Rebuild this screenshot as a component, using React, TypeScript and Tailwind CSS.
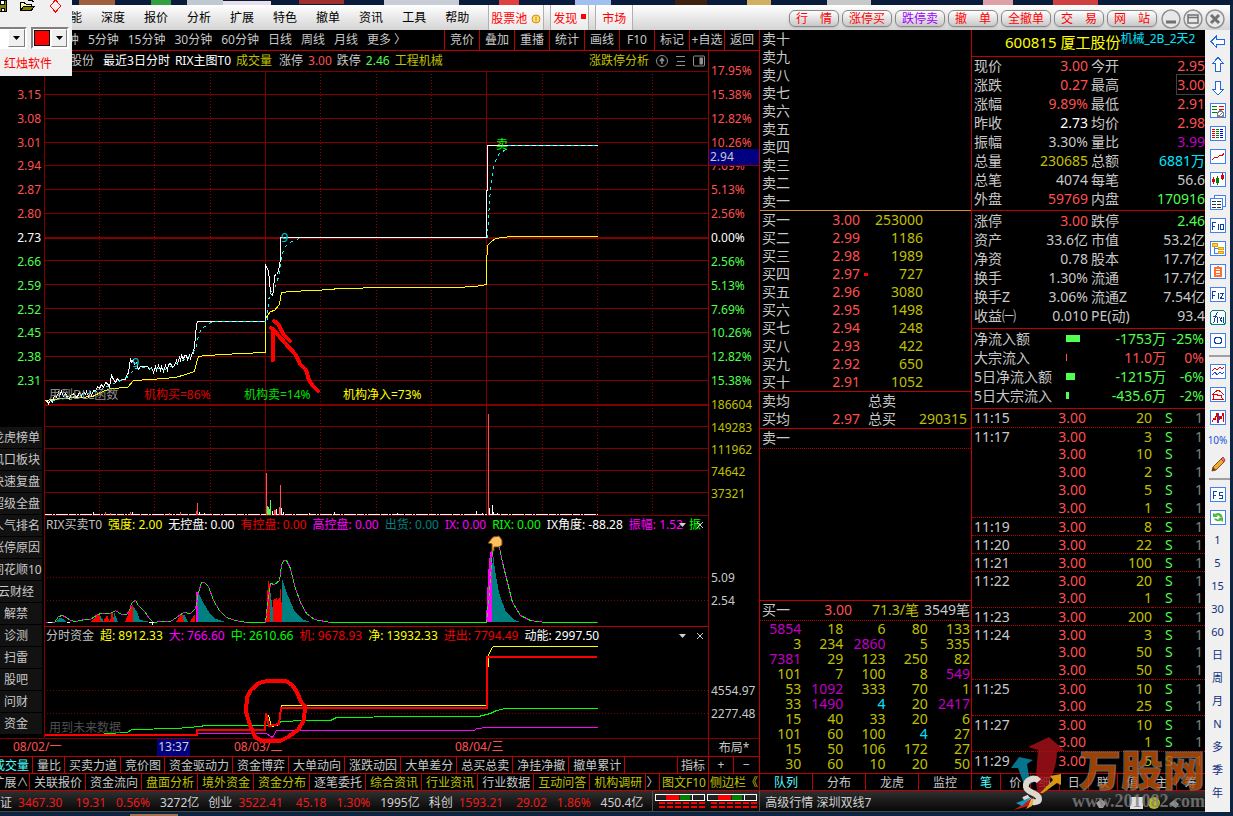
import React from 'react';

const font = "font-['Noto_Sans','Noto_Sans_CJK_SC',sans-serif]";

// price / percent axes
const prices = ['3.15', '3.08', '3.01', '2.94', '2.87', '2.80', '2.73', '2.66', '2.59', '2.52', '2.45', '2.38', '2.31'];
const percents = ['17.95%', '15.38%', '12.82%', '10.26%', '7.69%', '5.13%', '2.56%', '0.00%', '2.56%', '5.13%', '7.69%', '10.26%', '12.82%', '15.38%'];
const volumes = ['149283', '111962', '74642', '37321'];

const menus = ['功能', '深度', '报价', '分析', '扩展', '特色', '撤单', '资讯', '工具', '帮助'];
const periods = ['1分钟', '5分钟', '15分钟', '30分钟', '60分钟', '日线', '周线', '月线', '更多 〉'];
const tools = ['竞价', '叠加', '重播', '统计', '画线', 'F10', '标记', '+自选', '返回'];
const tradeButtons = ['行　情', '涨停买', '跌停卖', '撤　单', '全撤单', '交　易', '网　站'];
const sideLinks = ['龙虎榜单', '风口板块', '快速复盘', '超级全盘', '人气排名', '涨停原因', '同花顺10', '云财经', '解禁', '诊测', '扫雷', '股吧', '问财', '资金'];

const indicatorTabs = ['成交量', '量比', '买卖力道', '竞价图', '资金驱动力', '资金博弈', '大单动向', '涨跌动因', '大单差分', '总买总卖', '净挂净撤', '撤单累计'];
const infoTabs: [string, boolean][] = [
  ['关联报价', false],
  ['资金流向', false],
  ['盘面分析', true],
  ['境外资金', true],
  ['资金分布', true],
  ['逐笔委托', false],
  ['综合资讯', true],
  ['行业资讯', true],
  ['行业数据', false],
  ['互动问答', true],
  ['机构调研', true],
];

const numerals = ['一', '二', '三', '四', '五', '六', '七', '八', '九', '十'];
const bids = [
  ['3.00', '253000'],
  ['2.99', '1186'],
  ['2.98', '1989'],
  ['2.97', '727'],
  ['2.96', '3080'],
  ['2.95', '1498'],
  ['2.94', '248'],
  ['2.93', '422'],
  ['2.92', '650'],
  ['2.91', '1052'],
];

const queue = [
  ['5854', '18', '6', '80', '133'],
  ['3', '234', '2860', '5', '335'],
  ['7381', '29', '123', '250', '82'],
  ['101', '7', '100', '8', '549'],
  ['53', '1092', '333', '70', '1'],
  ['33', '1490', '4', '20', '2417'],
  ['15', '40', '33', '20', '6'],
  ['101', '60', '100', '4', '27'],
  ['15', '50', '106', '172', '27'],
  ['30', '60', '10', '20', '50'],
];

const RED = 'text-[#ff5050]';
const GREEN = 'text-[#50ff50]';
const GRAY = 'text-[#c8c8c8]';
const OLIVE = 'text-[#c0c000]';
const PURPLE = 'text-[#c000c0]';
const CYAN = 'text-[#00e5ff]';

const quote = [
  ['现价', '3.00', RED, '今开', '2.95', RED],
  ['涨跌', '0.27', RED, '最高', '3.00', RED],
  ['涨幅', '9.89%', RED, '最低', '2.91', RED],
  ['昨收', '2.73', 'text-white', '均价', '2.98', RED],
  ['振幅', '3.30%', GRAY, '量比', '3.99', PURPLE],
  ['总量', '230685', OLIVE, '总额', '6881万', CYAN],
  ['总笔', '4074', GRAY, '每笔', '56.6', GRAY],
  ['外盘', '59769', RED, '内盘', '170916', GREEN],
];

const finance = [
  ['涨停', '3.00', RED, '跌停', '2.46', GREEN],
  ['资产', '33.6亿', GRAY, '市值', '53.2亿', GRAY],
  ['净资', '0.78', GRAY, '股本', '17.7亿', GRAY],
  ['换手', '1.30%', GRAY, '流通', '17.7亿', GRAY],
  ['换手Z', '3.06%', GRAY, '流通Z', '7.54亿', GRAY],
  ['收益㈠', '0.010', GRAY, 'PE(动)', '93.4', GRAY],
];

const flows = [
  { name: '净流入额', bar: 14, value: '-1753万', pct: '-25%', up: false },
  { name: '大宗流入', bar: 1, value: '11.0万', pct: '0%', up: true },
  { name: '5日净流入额', bar: 9, value: '-1215万', pct: '-6%', up: false },
  { name: '5日大宗流入', bar: 3, value: '-435.6万', pct: '-2%', up: false },
];

const ticks = [
  ['11:15', '20'],
  ['11:17', '3'],
  ['', '10'],
  ['', '2'],
  ['', '5'],
  ['', '1'],
  ['11:19', '8'],
  ['11:20', '22'],
  ['11:21', '100'],
  ['11:22', '20'],
  ['', '1'],
  ['11:23', '200'],
  ['11:24', '3'],
  ['', '50'],
  ['', '50'],
  ['11:25', '10'],
  ['', '25'],
  ['11:27', '10'],
  ['', '1'],
  ['11:29', '5'],
];

const rixLegend = [
  ['RIX买卖T0', 'text-[#c0c0c0]'],
  ['强度: 2.00', 'text-[#ffff00]'],
  ['无控盘: 0.00', 'text-white'],
  ['有控盘: 0.00', 'text-[#f00000]'],
  ['高控盘: 0.00', 'text-[#ff00ff]'],
  ['出货: 0.00', 'text-[#008080]'],
  ['IX: 0.00', 'text-[#ff00ff]'],
  ['RIX: 0.00', 'text-[#00ff00]'],
  ['IX角度: -88.28', 'text-white'],
  ['振幅: 1.52', 'text-[#ff00ff]'],
  ['振', 'text-[#00ff00]'],
];

const fundLegend = [
  ['分时资金', 'text-[#c0c0c0]'],
  ['超: 8912.33', 'text-[#ffff00]'],
  ['大: 766.60', 'text-[#ff00ff]'],
  ['中: 2610.66', 'text-[#00ff00]'],
  ['机: 9678.93', 'text-[#f00000]'],
  ['净: 13932.33', 'text-[#ffff00]'],
  ['进出: 7794.49', 'text-[#f00000]'],
  ['动能: 2997.50', 'text-white'],
];

const indices = [
  ['上证', '3467.30', '19.31', '0.56%', '3272亿'],
  ['创业', '3522.41', '45.18', '1.30%', '1995亿'],
  ['科创', '1593.21', '29.02', '1.86%', '450.4亿'],
];

// chart series, all in the same x/y space
const priceLine =
  '45,402 47,400 48,404 50,399 52,402 54,395 56,397 58,392 59,395 61,391 63,396 65,393 67,397 69,399 70,395 73,393 75,397 77,396 79,392 81,396 83,391 85,394 86,391 88,396 90,392 91,395 93,390 95,391 97,386 99,388 101,384 103,387 105,382 107,383 109,387 110,380 111,375 113,379 115,382 117,378 119,381 121,379 125,379 127,373 128,373 129,365 130,358 131,362 133,359 134,364 136,362 138,369 140,366 147,366 149,369 151,367 153,372 155,366 156,370 158,365 160,370 161,366 163,371 165,365 167,370 168,364 170,363 172,367 174,365 176,360 177,363 179,357 180,360 181,355 183,359 184,355 186,355 187,359 189,355 190,358 192,352 193,353 195,336 196,324 197,321 265,321 265,264 268,271 269,280 270,293 272,295 273,290 274,275 276,274 278,271 280,258 280,237 486,237 486,190 487,190 487,145 597,145';
const averageLine =
  '45,400 60,398 80,397 92,396 100,392 110,388 127,387 133,380 150,379 175,377 185,374 194,371 196,362 198,356 206,355 240,353 265,352 265,318 270,311 274,310 279,304 281,292 290,291 332,289 336,288 390,287 455,287 475,286 486,284 486,264 487,245 491,241 495,238 511,236 597,236';
const cyanLines = [
  '52,400 70,396 90,393 105,387 120,380 128,376 134,368 142,367 165,369 180,361 192,354 196,345 198,335 201,328 206,325 212,321 265,321',
  '267,320 268,300 270,292 274,288 277,280 280,268 281,256 283,250 286,245 291,241 299,238',
  '487,238 489,200 491,178 494,163 498,154 505,149 508,145 597,145',
];
const rixLine =
  '45,622 54,622 58,616 62,615 66,617 70,620 75,621 80,620 84,619 90,619 97,614 101,613 110,613 115,610 121,614 126,614 129,610 131,603 133,601 135,600 138,605 144,611 149,618 153,622 160,621 170,621 176,617 183,612 190,613 195,608 198,592 201,582 204,582 208,586 213,600 219,610 226,617 235,620 246,622 265,622 267,604 270,583 274,584 279,580 281,565 283,560 286,560 290,568 294,585 300,602 306,613 314,619 330,622 486,622 489,590 492,550 494,536 496,536 499,547 502,562 507,582 512,602 520,615 530,620 545,622 597,622';

function Lines({ ys, color, dash }: { ys: number[]; color: string; dash?: string }) {
  return (
    <>
      {ys.map((y) => (
        <line key={y} x1="44" x2="708" y1={y + 0.5} y2={y + 0.5} stroke={color} strokeDasharray={dash} />
      ))}
    </>
  );
}

function Verticals({ from, to }: { from: number; to: number }) {
  return (
    <>
      {[99, 154, 210, 320, 376, 431, 542, 597, 652].map((x) => (
        <line key={x} x1={x + 0.5} x2={x + 0.5} y1={from} y2={to} stroke="#900000" strokeDasharray="1 2" />
      ))}
      {[44, 265, 486].map((x) => (
        <line key={x} x1={x + 0.5} x2={x + 0.5} y1={from} y2={to} stroke="#800000" />
      ))}
    </>
  );
}

function Plot({ top, height, children }: { top: number; height: number; children: React.ReactNode }) {
  return (
    <svg
      className="absolute inset-0 h-full w-full overflow-visible"
      viewBox={`44 ${top} 664 ${height}`}
      preserveAspectRatio="none"
      fill="none"
      shapeRendering="crispEdges"
    >
      {children}
    </svg>
  );
}

function PricePanel() {
  return (
    <div className="relative h-[334px]">
      <Plot top={71} height={334}>
        <Lines ys={[71, 94, 118, 142, 165, 189, 213, 237, 238, 260, 284, 308, 332, 356, 380, 404]} color="#800000" />
        <Verticals from={71} to={405} />
        <g transform="translate(0.5 0.5)">
          <polyline points={averageLine} stroke="#ffff00" />
          <polyline points={priceLine} stroke="#ffffff" />
          {cyanLines.map((p) => (
            <polyline key={p} points={p} stroke="#00ffff" strokeDasharray="3 4" />
          ))}
        </g>
        <g stroke="#ff0000" strokeWidth="4" strokeLinecap="round" strokeLinejoin="round">
          <path d="M273 360V329L285 343L296 355L300 364L306 370L309 380L313 386L318 391" />
          <path d="M271 328L277 333M274 321L278 324L284 335L290 341" />
        </g>
      </Plot>
      <span className="absolute left-[237px] top-[157px] text-[13px] leading-[18px] text-[#00c8d0]">9</span>
      <span className="absolute left-[88px] top-[282px] text-[13px] leading-[18px] text-[#00c8d0]">9</span>
      <span className="absolute left-[452px] top-[65px] text-xs leading-[18px] text-[#00ff00]">卖</span>
      <div className="absolute bottom-0 left-[5px] flex whitespace-nowrap text-xs leading-[20px]">
        <span className="w-[95px] text-[#909090]">用到DLL函数</span>
        <span className="w-[100px] text-[#e00000]">机构买=86%</span>
        <span className="w-[99px] text-[#00e000]">机构卖=14%</span>
        <span className="text-[#ffff00]">机构净入=73%</span>
      </div>
    </div>
  );
}

function VolumePanel() {
  const bars: [number, number, string][] = [
    [93, 3, '#fff'], [105, 3, '#ff5050'], [110, 2, '#ff5050'], [130, 3, '#ff5050'], [132, 3, '#fff'], [169, 2, '#ff5050'], [180, 3, '#ff5050'],
    [196, 4, '#ff5050'], [197, 12, '#ff5050'], [199, 3, '#fff'], [204, 2, '#fff'], [266, 42, '#ff5050'], [267, 9, '#50ff50'],
    [268, 8, '#50ff50'], [269, 6, '#50ff50'], [270, 15, '#50ff50'], [272, 4, '#fff'], [274, 5, '#ff5050'], [275, 5, '#ff5050'], [276, 6, '#fff'],
    [279, 8, '#ff5050'], [280, 30, '#ff5050'], [281, 7, '#fff'], [283, 3, '#fff'], [309, 2, '#fff'], [334, 3, '#fff'], [397, 2, '#fff'],
    [476, 4, '#fff'], [482, 2, '#fff'], [488, 101, '#ff5050'], [489, 7, '#fff'], [492, 10, '#fff'], [493, 3, '#fff'], [497, 2, '#fff'],
  ];
  return (
    <div className="relative h-[111px]">
      <Plot top={405} height={111}>
        <Lines ys={[405, 426, 448, 470, 492, 515]} color="#800000" />
        <Verticals from={405} to={515} />
        <line x1="45" x2="598" y1="514.5" y2="514.5" stroke="#fff" strokeDasharray="7 1 2 1 12 1" />
        {bars.map(([x, h, color]) => (
          <rect key={x} x={x} y={515 - h} width="1" height={h} fill={color} />
        ))}
      </Plot>
    </div>
  );
}

function Legend({ items }: { items: string[][] }) {
  return (
    <div className="relative flex h-[18px] items-center overflow-hidden whitespace-nowrap pl-0.5 text-xs">
      <div className="flex flex-1 gap-1.5 overflow-hidden">
        {items.map(([text, color], i) => (
          <span key={i} className={color}>
            {text}
          </span>
        ))}
      </div>
      <div className="absolute right-1 flex h-full items-center gap-2.5 text-[#d0d0d0]">
        <button aria-label="选择指标">
          <svg width="7" height="4" viewBox="0 0 7 4">
            <path d="M0 0H7L3.500 4Z" fill="currentColor" />
          </svg>
        </button>
        <button aria-label="关闭">
          <svg width="8" height="8" viewBox="0 0 8 8" stroke="currentColor">
            <path d="M1 1L7 7M7 1L1 7" />
          </svg>
        </button>
      </div>
    </div>
  );
}

function RixPanel() {
  return (
    <div className="relative h-[110px]">
      <Plot top={516} height={110}>
        <Lines ys={[577, 600]} color="#800000" dash="1 2" />
        <path d="M44.5 516V626" stroke="#800000" />
        <g fill="#008080">
          <path d="M55 622L59 618L64 619L66 622ZM96 622L100 615L104 622ZM113 622L114 612L118 622ZM133 622V606L137 612L140 620L150 622Z" />
          <path d="M181 622L184 614L188 622ZM198 622V592L203 602L210 614L216 619L225 622Z" />
          <path d="M269 622V582L272 604L275 622ZM282 622V579L288 596L295 612L302 619L310 622Z" />
          <path d="M490 622L493 552L495 570L499 593L506 612L514 620L521 622Z" />
        </g>
        <g fill="#ff0000">
          <path d="M90 622L95 617L99 613L101 622ZM103 622L107 615L110 622ZM110 622L112 610L114 622ZM125 622L132 605H133V622Z" />
          <path d="M176 622L182 613L184 622ZM190 622L194 615H195V622ZM266 622L268 579L270 586V622ZM273 622V600L277 598V622ZM277 622V600L280 598L281 580L282 622Z" />
        </g>
        <rect x="196" y="592" width="2" height="30" fill="#ff00ff" />
        <path d="M486 622L488 575L490 553L492 550V622Z" fill="#ff00ff" />
        <g transform="translate(0.5 0.5)">
          <polyline points={rixLine} stroke="#00ff00" />
          <polyline points={rixLine} stroke="#ff00ff" strokeDasharray="3 4" />
        </g>
        <path d="M330 622.500H486M545 622.500H597M246 622.500H265" stroke="#00ff00" />
        <path d="M48 622.500H52M67 622.500H70M149 622.500H154M152 623V625" stroke="#fff" />
        <g shapeRendering="auto">
          <path d="M488 543L493 537L499 536L502 540V545L499 547H494V551L492 551V544Z" fill="#ffc060" stroke="#804010" />
        </g>
      </Plot>
      <Legend items={rixLegend} />
    </div>
  );
}

function FundPanel() {
  return (
    <div className="relative h-[112px] border-t border-[#c00000]">
      <Plot top={627} height={111}>
        <Lines ys={[690, 713]} color="#800000" dash="1 2" />
        <path d="M44.5 627V738" stroke="#800000" />
        <g transform="translate(0.5 0.5)">
          <polyline points="104,733 127,732 131,729 176,728 200,726 204,725 265,725 275,724 281,721 305,720 330,720 336,717 411,716 478,716 490,713 496,710 505,708 597,708" stroke="#00ff00" />
          <polyline points="197,733 266,733 270,736 272,737 276,730 411,730 474,730 476,728 488,727 597,727" stroke="#ff00ff" />
          <polyline points="268,715 271,726 279,724 281,705 486,705 488,655 491,648 493,646 597,646" stroke="#ffff00" />
        </g>
        <polyline points="45,735 197,735 197,730 265,730 266,713 269,726 279,724 281,708 487,708 487,657 597,657" stroke="#ff0000" strokeWidth="2" />
        <path
          d="M272 681L286 681L292 685L297 692L301 702L305 706L304 720L298 730L288 737L280 741L262 741L255 737L250 725L246 712L247 697L251 690L259 683L267 681Z"
          stroke="#ff0000"
          strokeWidth="4"
          strokeLinejoin="round"
        />
      </Plot>
      <Legend items={fundLegend} />
      <span className="absolute bottom-px left-[5px] text-xs leading-[18px] text-[#505050]">用到未来数据</span>
    </div>
  );
}

function ChartColumn() {
  return (
    <section className="flex min-w-0 flex-1 flex-col text-xs text-[#c8c8c8]">
      <div className="flex h-[21px] border-b border-[#c00000]">
        <div className="flex flex-1 items-center gap-[9px] overflow-hidden whitespace-nowrap pl-12">
          {periods.map((p) => (
            <button key={p}>{p}</button>
          ))}
        </div>
        {tools.map((t) => (
          <button key={t} className="w-[35px] whitespace-nowrap border-l border-[#c00000]">
            {t}
          </button>
        ))}
      </div>

      <div className="flex">
        <div className="flex min-w-0 flex-1 flex-col">
          <div className="flex h-[20px] items-center gap-[5px] whitespace-nowrap pl-[46px]">
            <span>厦工股份</span>
            <span className="ml-1 text-white">最近3日分时</span>
            <span className="text-white">RIX主图T0</span>
            <span className="text-[#c0c000]">成交量</span>
            <span className="ml-0.5">涨停</span>
            <span className="text-[#ff5050]">3.00</span>
            <span>跌停</span>
            <span className="text-[#50ff50]">2.46</span>
            <span className="text-[#c0c000]">工程机械</span>
            <button className="ml-auto text-[#c0c000]">涨跌停分析</button>
            <svg className="ml-0.5" width="12" height="12" viewBox="0 0 12 12" fill="none" stroke="#909090">
              <circle cx="6" cy="6" r="5.500" />
              <path d="M6 9V4M4 6L6 3.500L8 6" strokeWidth="1.500" />
            </svg>
            <svg className="ml-[3px]" width="9" height="12" viewBox="0 0 9 12" stroke="#909090">
              <path d="M0 1.500H9M1 6.500H9M0 10.500H9" />
            </svg>
            <svg className="ml-[3px] mr-[3px]" width="12" height="12" viewBox="0 0 12 12" fill="none" stroke="#909090">
              <rect x="0.500" y="1" width="11" height="10" rx="1" />
              <rect x="7" y="3" width="2.500" height="6" fill="#909090" />
            </svg>
          </div>
          <div className="flex">
            <div className="flex w-11 flex-col overflow-hidden">
              <div className="h-3 pr-1 text-right leading-[2px] text-[#ff5050]">3.22</div>
              <div className="flex h-[310px] flex-col pr-[3px] text-right">
                {prices.map((p, i) => (
                  <div key={p} className={`flex flex-1 items-center justify-end ${i < 6 ? RED : i === 6 ? 'text-white' : GREEN}`}>
                    {p}
                  </div>
                ))}
              </div>
              <nav className="-ml-2 mt-[34px] flex w-[50px] flex-col gap-px">
                {sideLinks.map((s) => (
                  <button key={s} className="h-[21px] whitespace-nowrap bg-[#121212] pr-0.5">
                    {s}
                  </button>
                ))}
              </nav>
            </div>
            <div className="min-w-0 flex-1">
              <PricePanel />
              <VolumePanel />
              <RixPanel />
              <FundPanel />
            </div>
          </div>
        </div>

        <div className="relative flex w-[51px] flex-col border-l border-[#a00000] pl-0.5 pt-2">
          <div className="flex h-[358px] flex-col">
            {percents.map((p, i) => (
              <div key={i} className={`flex flex-1 items-center ${i < 7 ? RED : i === 7 ? 'text-white' : GREEN}`}>
                {p}
              </div>
            ))}
            <div className="flex flex-1 items-center text-[#c0c000]">186604</div>
          </div>
          {volumes.map((v) => (
            <div key={v} className="h-[22px] leading-[22px] text-[#c0c000]">
              {v}
            </div>
          ))}
          <div className="mt-[61px] h-[23px] leading-[23px]">5.09</div>
          <div className="h-[23px] leading-[23px]">2.54</div>
          <div className="mt-[67px] h-[23px] leading-[23px]">4554.97</div>
          <div className="h-[23px] leading-[23px]">2277.48</div>
          <div className="absolute left-0 top-[98px] h-[17px] w-full border-b border-[#800000] bg-[#000080] pl-px leading-[15px]">2.94</div>
        </div>
      </div>

      <div className="flex h-[18px] border-t border-[#800000] leading-[15px] text-[#ff5050]">
        <div className="flex flex-1">
          <span className="ml-[13px] w-[144px]">08/02/一</span>
          <span className="w-[33px] bg-[#000080] text-center text-[#d0d0d0]">13:37</span>
          <span className="ml-11 w-[221px]">08/03/二</span>
          <span>08/04/三</span>
        </div>
        <button className="w-[51px] border-l border-[#a00000] text-[#c8c8c8]">布局*</button>
      </div>

      <div className="flex h-[17px] overflow-hidden whitespace-nowrap border-t border-[#c00000]">
        <div className="-ml-[11px] flex">
          {indicatorTabs.map((t, i) => (
            <button key={t} className={`border-r border-[#c00000] pl-1 pr-[3px] leading-[18px] ${i === 0 ? 'text-[#50ffff]' : ''}`}>
              {t}
            </button>
          ))}
        </div>
        <button className="ml-auto w-[31px] border-l border-[#c00000] leading-[18px]">指标</button>
        <button className="w-[25px] border-l border-[#c00000] leading-4">+</button>
        <button className="w-[26px] border-l border-[#c00000] leading-4">−</button>
      </div>
      <div className="flex h-[18px] overflow-hidden whitespace-nowrap border-y border-[#c00000]">
        <div className="-ml-[10px] flex">
          <button className="w-10 border-r border-[#c00000] pl-0.5 leading-[18px]">扩展∧</button>
          {infoTabs.map(([t, yellow]) => (
            <button key={t} className={`border-r border-[#c00000] pl-1 pr-[3px] leading-[18px] ${yellow ? 'text-[#c0c000]' : ''}`}>
              {t}
            </button>
          ))}
        </div>
        <button className="w-3 flex-1 overflow-hidden leading-[18px]">〉</button>
        <button className="w-[49px] border-l border-[#c00000] leading-[18px] text-[#c0c000]">图文F10</button>
        <button className="w-[51px] overflow-hidden border-l border-[#c00000] pl-px text-left leading-[18px] text-[#c0c000]">侧边栏《</button>
      </div>
    </section>
  );
}

function DepthColumn() {
  return (
    <section className="flex w-[212px] flex-col border-l border-[#c00000] text-sm text-[#c8c8c8]">
      <div className="h-[180px] pl-0.5">
        {[...numerals].reverse().map((n) => (
          <div key={n} className="h-[18px] leading-[18px]">
            卖{n}
          </div>
        ))}
      </div>
      <table className="w-full table-fixed border-separate border-spacing-0 border-t border-[#d09030]">
        <tbody>
          {bids.map(([price, vol], i) => (
            <tr key={price} className="h-[18px] leading-[18px]">
              <td className="w-[50px] pl-0.5">买{numerals[i]}</td>
              <td className="w-[50px] text-right text-[#ff5050]">{price}</td>
              <td className="w-[10px] pl-1">{i === 3 && <i className="block h-[3px] w-1 bg-[#ff0000]" />}</td>
              <td className="pr-[48px] text-right text-[#c0c000]">{vol}</td>
            </tr>
          ))}
        </tbody>
      </table>
      <div className="h-[37px] border-t border-[#c00000] pl-0.5 leading-[18px]">
        <div className="flex">
          <span className="w-[106px]">卖均</span>
          <span>总卖</span>
        </div>
        <div className="flex">
          <span className="w-12">买均</span>
          <span className="w-[50px] text-right text-[#ff5050]">2.97</span>
          <span className="pl-2">总买</span>
          <span className="flex-1 pr-1 text-right text-[#c0c000]">290315</span>
        </div>
      </div>
      <div className="h-[20px] border-t border-[#c00000] pl-0.5 leading-[18px]">卖一</div>
      <div className="flex-1 border-t border-dotted border-[#c00000]" />
      <div className="flex h-[20px] border-t border-[#c00000] pl-0.5 leading-[18px]">
        <span className="w-[50px]">买一</span>
        <span className="w-[40px] text-right text-[#ff5050]">3.00</span>
        <span className="flex-1 text-right text-[#c0c000]">71.3/笔</span>
        <span className="w-[52px] pr-px text-right">3549笔</span>
      </div>
      <table className="w-full table-fixed border-separate border-spacing-0 border-t border-dotted border-[#c00000] text-[#c0c000]">
        <tbody>
          {queue.map((row, r) => (
            <tr key={r} className="h-[15px] leading-[15px]">
              {row.map((v, c) => (
                <td key={c} className={`pr-px text-right ${Number(v) > 500 ? PURPLE : v === '4' ? CYAN : ''}`}>
                  {v}
                </td>
              ))}
            </tr>
          ))}
        </tbody>
      </table>
      <div className="mt-0.5 flex h-[18px] border-y border-[#c00000] text-xs">
        {['队列', '分布', '龙虎', '监控'].map((t, i) => (
          <button key={t} className={`flex-1 leading-[18px] ${i === 0 ? 'text-[#50ffff]' : 'border-l border-[#c00000]'}`}>
            {t}
          </button>
        ))}
      </div>
    </section>
  );
}

function PairTable({ rows }: { rows: string[][] }) {
  return (
    <table className="w-full table-fixed">
      <tbody>
        {rows.map(([a, av, ac, b, bv, bc]) => (
          <tr key={a} className="h-[19px] align-top leading-[17px]">
            <td className="w-[50px] whitespace-nowrap pl-0.5">{a}</td>
            <td className={`w-[66px] text-right ${ac}`}>{av}</td>
            <td className="w-[50px] whitespace-nowrap pl-[3px]">{b}</td>
            <td className={`text-right ${bc}`}>
              <span className={b === '最高' ? 'outline-1 outline-solid outline-[#404040]' : ''}>{bv}</span>
            </td>
          </tr>
        ))}
      </tbody>
    </table>
  );
}

function QuoteColumn() {
  return (
    <section className="flex w-[234px] flex-col border-l border-[#c00000] text-sm text-[#c8c8c8]">
      <div className="flex h-[26px] whitespace-nowrap pl-[33px]">
        <h1 className="text-[15px] leading-[25px] text-[#ffff00]">600815 厦工股份</h1>
        <span className="text-xs leading-[17px] text-[#00e5ff]">机械_2B_2天2</span>
      </div>
      <div className="h-[154px] border-t border-[#c00000]">
        <PairTable rows={quote} />
      </div>
      <div className="h-[118px] border-t border-[#c00000] pt-px">
        <PairTable rows={finance} />
      </div>
      <div className="h-[80px] border-t border-[#c00000]">
        <table className="w-full table-fixed">
          <tbody>
            {flows.map((f) => (
              <tr key={f.name} className="h-[19px] leading-[19px]">
                <td className="w-[94px] whitespace-nowrap pl-0.5">{f.name}</td>
                <td className="w-[20px]">
                  <div className={f.up ? 'h-[7px] bg-[#ff5050]' : 'h-[7px] bg-[#50ff50]'} style={{ width: f.bar }} />
                </td>
                <td className={`w-[80px] text-right ${f.up ? RED : GREEN}`}>{f.value}</td>
                <td className={`pr-px text-right ${f.up ? RED : GREEN}`}>{f.pct}</td>
              </tr>
            ))}
          </tbody>
        </table>
      </div>
      <div className="flex-1 border-t border-[#c00000]">
        <table className="w-full table-fixed border-separate border-spacing-0">
          <tbody>
            {ticks.map(([time, vol], i) => {
              const line = time && i > 0 ? 'border-t border-dotted border-[#c00000] leading-[17px]' : 'leading-[18px]';
              return (
                <tr key={i} className="h-[18px]">
                  <td className={`w-[60px] pl-0.5 ${line}`}>{time}</td>
                  <td className={`w-[54px] text-right text-[#ff5050] ${line}`}>3.00</td>
                  <td className={`w-[66px] text-right text-[#c0c000] ${line}`}>{vol}</td>
                  <td className={`w-[24px] pl-[13px] text-[#50ff50] ${line}`}>S</td>
                  <td className={`pr-0.5 text-right text-[#808080] ${line}`}>1</td>
                </tr>
              );
            })}
          </tbody>
        </table>
      </div>
      <div className="flex h-[18px] border-y border-[#c00000] text-xs">
        {['笔', '价', '细', '日', '联', '值', '主', '筹'].map((t, i) => (
          <button key={t} className={`flex-1 leading-[18px] ${i === 0 ? 'text-[#50ffff]' : 'border-l border-[#c00000]'}`}>
            {t}
          </button>
        ))}
      </div>
    </section>
  );
}

function Meter() {
  return (
    <svg width="50" height="15" viewBox="0 0 50 15" fill="none" shapeRendering="crispEdges">
      <rect x="0.500" y="0.500" width="49" height="6" stroke="#fff" />
      <rect x="11" y="1" width="13" height="5" fill="#ff0000" />
      <rect x="25" y="1" width="10" height="5" fill="#008000" />
      <path d="M37.500 1V6" stroke="#fff" />
      <path d="M4 9H50M4 13H50" stroke="#ff0000" strokeWidth="2" strokeDasharray="6 2" />
    </svg>
  );
}

function StatusBar() {
  return (
    <footer className="flex h-[21px] items-center overflow-hidden whitespace-nowrap border-b border-[#404848] bg-linear-to-b from-[#303030] to-[#080808] pt-[3px] text-xs text-[#d0d0d0]">
      <div className="-ml-3 flex">
        {indices.map(([name, value, change, pct, amount]) => (
          <div key={name} className="flex">
            <span className="mr-1.5">{name}</span>
            <span className="mr-[13px] text-[#f01818]">{value}</span>
            <span className="mr-2.5 text-[#f01818]">{change}</span>
            <span className="mr-2.5 text-[#f01818]">{pct}</span>
            <span className="mr-[9px]">{amount}</span>
          </div>
        ))}
      </div>
      <div className="-mt-[3px] flex h-[21px] items-center gap-0.5 border-x border-[#505050] px-0.5">
        <Meter />
        <Meter />
      </div>
      <span className="pl-[5px]">高级行情 深圳双线7</span>
      <svg className="ml-auto mr-[22px]" width="90" height="14" viewBox="0 0 90 14">
        <path d="M3 7L8 3L13 7L10 12H6Z" fill="#a0a0a0" />
        <rect x="37" y="1" width="13" height="12" fill="#e0e0e0" />
        <circle cx="61" cy="7" r="6" fill="#b8b820" />
        <path d="M76 8L81 4L86 8L83 12Z" fill="#909090" />
      </svg>
    </footer>
  );
}

const box = <rect x="0.500" y="0.500" width="15" height="14" fill="#fff" stroke="#4080f0" />;

const toolIcons: { label: string; art: React.ReactNode }[] = [
  { label: '后退', art: <path d="M1 7.500L6.500 2V5.500H14.500V10.500H6.500V13.500Z" fill="#fff" stroke="#2068e0" /> },
  { label: '上翻', art: <path d="M8 0.500L13.500 6.500H10.500V14.500H5.500V6.500H2.500Z" fill="#fff" stroke="#2068e0" /> },
  { label: '下翻', art: <path d="M8 15L13.500 9.500H10.500V1.500H5.500V9.500H2.500Z" fill="#fff" stroke="#2068e0" /> },
  { label: '多股设置', art: <>{box}<path d="M2 3.500H7M2 6.500H7M2 9.500H7" stroke="#008000" /><path d="M9 3.500H14M9 6.500H14" stroke="#f00000" /><circle cx="10.500" cy="11" r="3" fill="#fff" stroke="#808080" strokeWidth="1.500" /><path d="M8 14L13 9" stroke="#808080" /></> },
  { label: '行情表', art: <>{box}<path d="M2 3.500H5M2 5.500H5M2 7.500H5M2 9.500H5M2 11.500H5" stroke="#f00000" /><path d="M6 3.500H9M6 5.500H9M6 7.500H9M6 9.500H9M6 11.500H9" stroke="#008000" /><path d="M10 3.500H13M10 5.500H13M10 7.500H13M10 9.500H13M10 11.500H13" stroke="#0000f0" /></> },
  { label: '分时', art: <>{box}<path d="M2 11L5 8L7 9L10 6L12 7L14 4" stroke="#e00000" /></> },
  { label: 'K线', art: <>{box}<path d="M3.500 5V12M12.500 1V8" stroke="#e00000" /><path d="M2 7H5V10H2ZM11 3H14V7H11Z" fill="#e00000" /><path d="M7.500 4V13" stroke="#008000" /><path d="M6 6H9V11H6Z" fill="#008000" /></> },
  { label: '列表', art: <><rect x="4.500" y="0.500" width="11" height="11" fill="#fff" stroke="#4080f0" /><rect x="0.500" y="3.500" width="12" height="11" fill="#fff" stroke="#4080f0" /><path d="M2 6.500H6M7 6.500H11M2 9.500H6M7 9.500H11M2 12.500H6M7 12.500H11" stroke="#303030" /></> },
  { label: 'F10', art: <>{box}<path d="M2.500 12V4.500H6M2.500 8.500H5M8.500 6V12M10.500 6.500H13.500V11.500H10.500Z" stroke="#1040a0" /></> },
  { label: '板块树', art: <>{box}<path d="M4.500 4V12.500H9M5 7.500H9" stroke="#4080f0" /><path d="M2.500 2.500H7.500V5.500H2.500ZM8.500 6.500H13.500V8.500H8.500ZM8.500 10.500H13.500V12.500H8.500Z" fill="#ffd040" stroke="#e0a000" /></> },
  { label: '自选', art: <>{box}<path d="M5 4H11V12H5ZM8 4V2M5 6.500H11M5 9.500H11" stroke="#ff7030" strokeWidth="1.600" /></> },
  { label: 'F12', art: <>{box}<path d="M2.500 12V4.500H6M2.500 8.500H5M8.500 6V12M10 6.500H13.500L10.500 11.500H14" stroke="#1040a0" /></> },
  { label: '公式', art: <><rect x="0.500" y="0.500" width="15" height="14" rx="3" fill="#fff" stroke="#008080" /><path d="M3 13C5 13 5 3 8 2.500M3 6.500H7M8 7C7 9 7 11 8 13M9.500 7.500L12 11.500M12 7.500L9.500 11.500M13 7C14 9 14 11 13 13" stroke="#1040a0" /></> },
  { label: '圈', art: <>{box}<circle cx="8" cy="7.500" r="3.500" stroke="#1040c0" /></> },
  { label: '-', art: null },
  { label: '走势叠加', art: <>{box}<path d="M2 7L5 4L7 6L10 3L12 5L14 3" stroke="#e00000" /><path d="M2 11L5 8L7 11L10 8L12 10L14 8" stroke="#2040e0" /></> },
  { label: '山形图', art: <>{box}<path d="M2 8L5 5L8 3L11 5L14 8M2 12.500H14M3.500 12V8L6 7L9 9L11 8L12.500 12" stroke="#e00000" /></> },
  { label: '波动', art: <>{box}<path d="M2 12L4 8L5 10L7 3L8 13L10 6L11 9L13 3V12" stroke="#e00000" /><path d="M8.500 3V13" stroke="#2040e0" /></> },
  { label: '10%', art: null },
  { label: '画笔', art: <g shapeRendering="auto"><path d="M2 15L3 11L11 3L14 6L6 14Z" fill="#f0a830" stroke="#805020" /><path d="M11 3L13 1L15 4L14 6Z" fill="#f07070" stroke="#a04040" /><path d="M2 15L3 11L6 14Z" fill="#604020" /></g> },
  { label: '-', art: null },
  { label: 'F5', art: <>{box}<path d="M3.500 12V4.500H7M3.500 8.500H6M12.500 5.500H9.500V8.500H12.500V11.500H9" stroke="#1040a0" /></> },
  { label: '刷新', art: <>{box}<g shapeRendering="auto"><path d="M3 7V3L5 4C8 2 12 3 12.500 7H10C9.500 5.500 8 5 6.500 5.800L8 7ZM13 7V12L11 10.500C8 12 5 11 4 8.500H6.500C7 9.500 8 9.800 9.500 9L8 8Z" fill="#50b840" /></g></> },
  { label: '1', art: null },
  { label: '5', art: null },
  { label: '15', art: null },
  { label: '30', art: null },
  { label: '60', art: null },
  { label: '日', art: null },
  { label: '周', art: null },
  { label: '月', art: null },
  { label: 'N', art: null },
  { label: '多', art: null },
  { label: '季', art: null },
  { label: '年', art: null },
];

function Toolbar() {
  return (
    <aside className="flex w-[25px] flex-col bg-[#f0f0f0] text-[#103080]">
      {toolIcons.map((t, i) =>
        t.label === '-' ? (
          <hr key={i} className="my-[3px] ml-1 border-t-2 border-[#a0a0a0]" />
        ) : (
          <button
            key={i}
            aria-label={t.label}
            className={`flex h-[23px] items-center justify-center ${t.label === '10%' ? 'text-[10px] text-[#2050e0]' : 'text-[11px]'}`}
          >
            {t.art ? (
              <svg width="16" height="16" viewBox="0 0 16 16" fill="none" shapeRendering="crispEdges">
                {t.art}
              </svg>
            ) : (
              t.label
            )}
          </button>
        )
      )}
    </aside>
  );
}

function MenuBar() {
  return (
    <header className="flex h-[25px] items-center whitespace-nowrap bg-linear-to-b from-white to-[#d4d4d4] text-xs text-black">
      <nav className="flex gap-[19px] pl-[58px] pt-px">
        {menus.map((m) => (
          <button key={m}>{m}</button>
        ))}
      </nav>
      <div className="ml-[19px] flex h-full gap-1.5 text-[#ff0000]">
        <button className="flex items-center gap-1 border-x border-[#b0b0b0] bg-white/50 px-0.5 pt-0.5">
          股票池
          <svg width="10" height="10" viewBox="0 0 10 10" fill="none" stroke="#d09010">
            <circle cx="5" cy="5" r="4" fill="#ffe070" />
            <path d="M5 2.500V7.500" />
          </svg>
        </button>
        <button className="flex gap-1 border-x border-[#b0b0b0] bg-white/50 px-0.5 leading-[27px]">
          发现
          <i className="mt-[9px] h-[5px] w-[5px] bg-[#ff0000]" />
        </button>
        <button className="border-x border-[#b0b0b0] bg-white/50 px-1.5 pt-0.5">市场</button>
      </div>
      <div className="ml-auto mr-1 flex items-center gap-[3px] pt-0.5">
        {tradeButtons.map((b) => (
          <button
            key={b}
            className={`h-[17px] w-[50px] rounded-md border border-[#888888] bg-linear-to-b from-white to-[#c8c8c8] leading-[15px] shadow-sm ${
              b === '跌停卖' ? 'text-[#a000ff]' : 'text-[#ff0000]'
            }`}
          >
            {b}
          </button>
        ))}
      </div>
      <div className="mr-[5px] flex gap-0.5 pt-0.5">
        {['M5 13H15', 'M5 6H15V14H5ZM5 8.500H15', 'M6 6L14 14M14 6L6 14'].map((d, i) => (
          <button key={d} aria-label={['最小化', '还原', '关闭'][i]}>
            <svg width="20" height="20" viewBox="0 0 20 20" fill="none" stroke="#707070">
              <circle cx="10" cy="10" r="9" fill="#e8e8e8" stroke="#909090" strokeWidth="1.500" />
              <path d={d} strokeWidth={i === 1 ? 1.5 : 3} />
            </svg>
          </button>
        ))}
      </div>
    </header>
  );
}

// small floating window in the top-left corner
function PaintTool() {
  return (
    <div className="absolute left-0 top-0 h-[76px] w-[72px] overflow-hidden bg-[#f0f0f0] text-xs">
      <svg width="72" height="13" viewBox="0 0 72 13" fill="none" shapeRendering="crispEdges">
        <path d="M-4 0H6V11H-4Z" fill="#808000" stroke="#000" />
        <path d="M0 0H4V4H0ZM1 8H4V11H1Z" fill="#fff" stroke="#000" />
        <path d="M20.500 10.500V2.500H24L26 4H31V6" fill="#ffffa0" stroke="#000" />
        <path d="M20.500 10.500L24 6H35L31 10.500Z" fill="#808000" stroke="#000" />
        <path d="M28 1L31 0L34 2" stroke="#000" />
        <path d="M55.500 0L61 6L55.500 12L50 6Z" stroke="#ff0000" />
      </svg>
      <div className="mt-3.5 flex gap-1">
        <div className="flex h-[22px] w-[27px] border-2 border-l-0 border-[#808080] border-b-white border-r-white bg-white">
          <select aria-label="线宽" className="w-2 appearance-none bg-white" />
          <span className="flex-1 border border-[#808080] border-l-white border-t-white bg-[#f0f0f0] pt-1.5">
            <svg className="mx-auto" width="7" height="4" viewBox="0 0 7 4"><path d="M0 0H7L3.500 4Z" /></svg>
          </span>
        </div>
        <div className="flex h-[22px] w-[38px] border-2 border-[#808080] border-b-white border-r-white bg-white">
          <select aria-label="颜色" className="m-px w-4 appearance-none border border-black bg-[#ff0000]" />
          <span className="flex-1 border border-[#808080] border-l-white border-t-white bg-[#f0f0f0] pt-1.5">
            <svg className="mx-auto" width="7" height="4" viewBox="0 0 7 4"><path d="M0 0H7L3.500 4Z" /></svg>
          </span>
        </div>
      </div>
      <p className="pl-1 pt-[7px] leading-4 text-[#ff0000]">红烛软件</p>
    </div>
  );
}

function Watermark() {
  return (
    <div className="pointer-events-none absolute bottom-[5px] right-7 flex items-end">
      <svg className="-mr-1.5" width="68" height="76" viewBox="1012 735 68 76">
        <path d="M1030 747L1051 737L1067 751H1059C1059 765 1054 780 1043 795C1036 790 1038 777 1040 750Z" fill="#a01018" opacity=".85" />
        <path d="M1013 768L1021 757L1035 760L1029 764L1031 776L1036 782L1027 787L1020 768Z" fill="#0888a8" opacity=".85" />
        <path d="M1042 793L1055 780L1052 776L1063 774V785L1059 783L1045 793Z" fill="#d89810" />
        <path d="M1041 781C1036 776 1027 780 1028 787C1029 793 1041 793 1041 799C1041 804 1030 803 1027 796" fill="none" stroke="#ded8d0" strokeWidth="6" />
        <path d="M1016 810L1034 798L1030 806Z" fill="#c81818" />
        <path d="M1018 803L1034 797L1024 806Z" fill="#1898b8" />
        <path d="M1028 809L1036 797L1034 806Z" fill="#e8b020" />
      </svg>
      <div className="text-right opacity-80">
        <div className="text-[42px] font-black leading-[43px] text-[#c85000] [-webkit-text-stroke:1px_#808080]">万股网</div>
        <div className="font-['Liberation_Serif',serif] text-lg font-bold leading-[20px] text-[#808080]">www.201082.com</div>
      </div>
    </div>
  );
}

export default function App() {
  return (
    <div className={`relative min-h-screen overflow-hidden bg-[#0c2440] ${font}`}>
      <div className="flex h-[5px] bg-[#0a1c3c] pl-[75px]">
        <div className="ml-1 h-full w-9 bg-[#a06040]" />
        <div className="ml-9 h-full w-5 bg-[#30a040]" />
        <div className="ml-4 h-full w-9 bg-[#c0c8d0]" />
        <div className="mt-px h-1 w-12 bg-[#e8e0e8]" />
        <div className="ml-7 h-1 w-[45px] bg-[#a03030]" />
        <div className="ml-10 h-full w-[75px] bg-[#c8ccd4]" />
        <div className="ml-10 h-full w-5 bg-[#e04040]" />
        <div className="ml-14 h-full w-9 bg-[#a0c0f0]" />
        <div className="ml-16 h-full w-8 bg-[#402010]" />
        <div className="ml-10 h-full w-6 bg-[#d0b060]" />
        <div className="ml-14 h-full w-11 bg-[#c8c8c8]" />
        <div className="ml-28 h-full w-[30px] bg-[#e0a0a8]" />
        <div className="ml-10 h-full w-[45px] bg-[#d04040]" />
      </div>
      <div className="mr-[3px]">
        <MenuBar />
        <div className="flex">
          <div className="min-w-0 flex-1 bg-black">
            <div className="flex">
              <ChartColumn />
              <DepthColumn />
              <QuoteColumn />
            </div>
            <StatusBar />
          </div>
          <Toolbar />
        </div>
      </div>
      <div className="ml-[130px] mt-0.5 h-0.5 w-12 bg-[#a07050]" />
      <PaintTool />
      <Watermark />
    </div>
  );
}
